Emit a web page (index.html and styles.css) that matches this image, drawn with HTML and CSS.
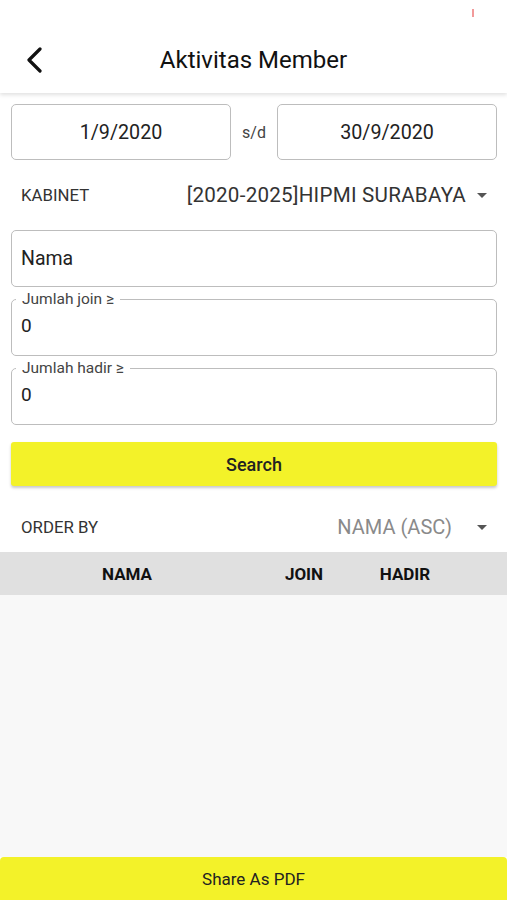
FILE: index.html
```html
<!DOCTYPE html>
<html lang="id">
<head>
    <meta charset="UTF-8">
    <meta name="viewport" content="width=device-width, initial-scale=1.0">
    <title>Aktivitas Member</title>
    <link rel="stylesheet" href="styles.css">
</head>
<body>

<div class="screen">
    <header class="app-header">
        <span class="status-dot"></span>
        <div class="toolbar">
            <a href="#" class="back-btn">
                <svg width="20" height="26" viewBox="0 0 20 26">
                    <path d="M15 2 L4 13 L15 24" fill="none" stroke="#111" stroke-width="3.2" stroke-linecap="round" stroke-linejoin="round"/>
                </svg>
            </a>
            <h1>Aktivitas Member</h1>
        </div>
    </header>

    <div class="content">
        <!-- periode -->
        <div class="date-row">
            <div class="date-box">1/9/2020</div>
            <span class="sd">s/d</span>
            <div class="date-box">30/9/2020</div>
        </div>

        <div class="select-row">
            <span class="select-label">KABINET</span>
            <span class="select-value">[2020-2025]HIPMI SURABAYA</span>
            <span class="caret"></span>
        </div>

        <div class="text-box">Nama</div>

        <fieldset class="num-box">
            <legend>Jumlah join ≥</legend>
            <span>0</span>
        </fieldset>

        <fieldset class="num-box">
            <legend>Jumlah hadir ≥</legend>
            <span>0</span>
        </fieldset>

        <button class="search-btn">Search</button>

        <div class="select-row order-row">
            <span class="select-label">ORDER BY</span>
            <span class="select-value muted">NAMA (ASC)</span>
            <span class="caret"></span>
        </div>
    </div>

    <div class="table-head">
        <span>NAMA</span>
        <span>JOIN</span>
        <span>HADIR</span>
    </div>
    <div class="table-body"></div>

    <button class="share-btn">Share As PDF</button>
</div>

</body>
</html>
```

FILE: styles.css
```css
body {
    margin: 0;
    padding: 0;
    font-family: Roboto, "Noto Sans", Arial, sans-serif;
    background-color: #fff;
    color: #1c1c1c;
}

.screen {
    width: 507px;
    height: 900px;
    display: flex;
    flex-direction: column;
    overflow: hidden;
}

/* header */
.app-header {
    position: relative;
    height: 93px;
    box-sizing: border-box;
    padding-top: 40px;
    background-color: #fff;
    box-shadow: 0 2px 4px rgba(0, 0, 0, 0.12);
    z-index: 2;
}

.status-dot {
    position: absolute;
    top: 9px;
    left: 472px;
    width: 2px;
    height: 8px;
    background-color: #f29a9a;
}

.toolbar {
    height: 40px;
    display: flex;
    align-items: center;
    justify-content: center;
    position: relative;
}

.back-btn {
    position: absolute;
    left: 25px;
    top: 7px;
    display: flex;
}

.toolbar h1 {
    margin: 0;
    font-size: 24px;
    font-weight: 400;
    color: #111;
}

.content {
    padding: 11px 10px 0 11px;
}

/* tanggal */
.date-row {
    display: flex;
    align-items: center;
}

.date-box {
    width: 220px;
    height: 56px;
    box-sizing: border-box;
    border: 1.5px solid #bdbdbd;
    border-radius: 5px;
    display: flex;
    align-items: center;
    justify-content: center;
    font-size: 19.7px;
    color: #222;
}

.sd {
    width: 46px;
    text-align: center;
    font-size: 16px;
    color: #444;
}

/* dropdown */
.select-row {
    height: 70px;
    display: flex;
    align-items: center;
    padding: 0 10px;
}

.select-label {
    font-size: 16.8px;
    color: #333;
    flex: 1;
}

.select-value {
    font-size: 20.6px;
    letter-spacing: 0.25px;
    color: #333;
}

.select-value.muted {
    font-size: 20px;
    letter-spacing: 0;
    color: #8a8a8a;
    margin-right: 14px;
}

.caret {
    width: 0;
    height: 0;
    margin-left: 11px;
    border-left: 5px solid transparent;
    border-right: 5px solid transparent;
    border-top: 5px solid #555;
}

/* input */
.text-box {
    height: 57px;
    box-sizing: border-box;
    border: 1.5px solid #bdbdbd;
    border-radius: 5px;
    display: flex;
    align-items: center;
    padding-left: 9px;
    font-size: 19.5px;
    color: #222;
}

.num-box {
    margin: 3px 0 0;
    height: 66px;
    box-sizing: border-box;
    border: 1.5px solid #bdbdbd;
    border-radius: 5px;
    padding: 6px 9px 0;
    font-size: 19px;
    color: #222;
}

.num-box legend {
    font-size: 15.5px;
    color: #444;
    padding: 0 6px 0 6px;
    margin-left: -5px;
}

.search-btn {
    display: block;
    width: 100%;
    height: 44px;
    margin-top: 17px;
    border: none;
    border-radius: 3px;
    background-color: #f3f229;
    box-shadow: 0 2px 3px rgba(0, 0, 0, 0.22);
    font-family: inherit;
    font-size: 18px;
    font-weight: 500;
    color: #222;
}

.order-row {
    height: 50px;
    margin-top: 16px;
}

/* tabel */
.table-head {
    height: 43px;
    flex-shrink: 0;
    background-color: #e0e0e0;
    display: grid;
    grid-template-columns: 254px 100px 102px 1fr;
    align-items: center;
    text-align: center;
    font-size: 17px;
    font-weight: 700;
    color: #111;
}

.table-body {
    flex: 1;
    background-color: #f8f8f8;
}

.share-btn {
    height: 43px;
    flex-shrink: 0;
    border: none;
    border-radius: 4px 4px 0 0;
    background-color: #f3f229;
    font-family: inherit;
    font-size: 17px;
    color: #222;
}
```
